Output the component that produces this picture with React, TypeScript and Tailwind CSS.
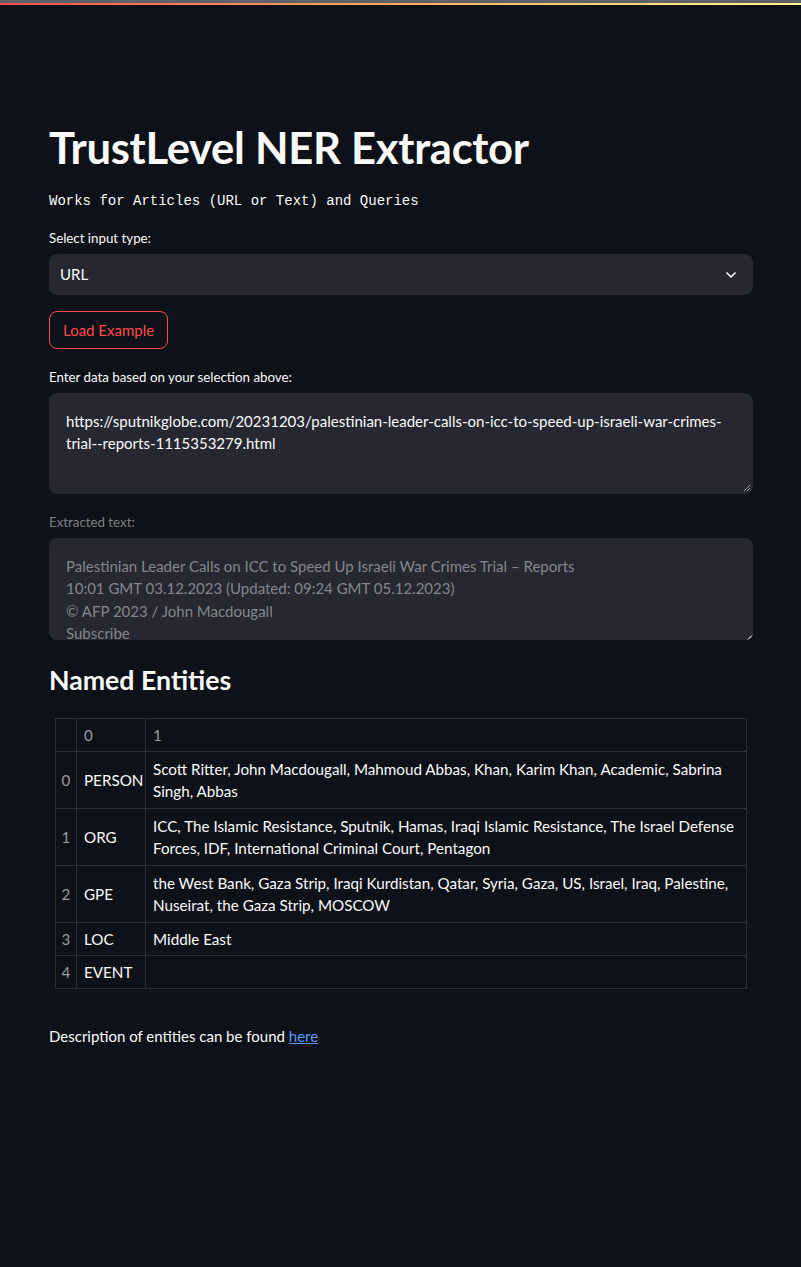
import { ChevronDown } from "lucide-react";

const rows = [
  { i: 0, type: "PERSON", text: "Scott Ritter, John Macdougall, Mahmoud Abbas, Khan, Karim Khan, Academic, Sabrina Singh, Abbas" },
  { i: 1, type: "ORG", text: "ICC, The Islamic Resistance, Sputnik, Hamas, Iraqi Islamic Resistance, The Israel Defense Forces, IDF, International Criminal Court, Pentagon" },
  { i: 2, type: "GPE", text: "the West Bank, Gaza Strip, Iraqi Kurdistan, Qatar, Syria, Gaza, US, Israel, Iraq, Palestine, Nuseirat, the Gaza Strip, MOSCOW" },
  { i: 3, type: "LOC", text: "Middle East" },
  { i: 4, type: "EVENT", text: "" },
];

function Label({ children, muted }: { children: React.ReactNode; muted?: boolean }) {
  return (
    <div className={`text-[13.3px] leading-[22px] mb-[5px] ${muted ? "text-[#7d7e83]" : "text-[#fafafa]"}`}>
      {children}
    </div>
  );
}

export default function App() {
  return (
    <div
      className="min-h-[1267px] bg-[#0e1117] text-[#fafafa]"
      style={{ fontFamily: "Lato, 'Liberation Sans', sans-serif" }}
    >
      {/* top decoration */}
      <div className="h-[3px] bg-[#5c6267]" />
      <div className="h-[2px] bg-gradient-to-r from-[#ff4b4b] to-[#fffd80]" />

      <div className="pl-[49px] pr-[48px] pt-[112px]">
        <h1 className="text-[43.6px] leading-[60px] font-bold tracking-[-0.3px]">TrustLevel NER Extractor</h1>
        <p
          className="mt-[14px] text-[14px] leading-[20px]"
          style={{ fontFamily: "'Liberation Mono', 'DejaVu Sans Mono', monospace" }}
        >
          Works for Articles (URL or Text) and Queries
        </p>

        <div className="mt-[16px]">
          <Label>Select input type:</Label>
          <div className="h-[41px] rounded-[8px] bg-[#262730] flex items-center justify-between pl-[11px] pr-[14px] text-[15px]">
            <span>URL</span>
            <ChevronDown size={16} strokeWidth={2.5} />
          </div>
        </div>

        <button className="mt-[16px] h-[38px] px-[13px] rounded-[8px] border border-[#ff4b4b] text-[#ff4b4b] text-[15px]">
          Load Example
        </button>

        <div className="mt-[17px]">
          <Label>Enter data based on your selection above:</Label>
          <div className="relative h-[101px] rounded-[8px] bg-[#262730] px-[17px] pt-[17px] text-[15px] leading-[22.4px]">
            https://sputnikglobe.com/20231203/palestinian-leader-calls-on-icc-to-speed-up-israeli-war-crimes-trial--reports-1115353279.html
            <svg className="absolute right-[2px] bottom-[2px]" width="8" height="8" viewBox="0 0 8 8">
              <path d="M7 1 L1 7 M7 4 L4 7" stroke="#9a9ba0" strokeWidth="1" />
            </svg>
          </div>
        </div>

        <div className="mt-[17px]">
          <Label muted>Extracted text:</Label>
          <div className="relative h-[102px] overflow-hidden rounded-[8px] bg-[#262730] px-[17px] pt-[17px] text-[15px] leading-[22.4px] text-[#85868b]">
            <div>Palestinian Leader Calls on ICC to Speed Up Israeli War Crimes Trial – Reports</div>
            <div>10:01 GMT 03.12.2023 (Updated: 09:24 GMT 05.12.2023)</div>
            <div>© AFP 2023 / John Macdougall</div>
            <div>Subscribe</div>
            <svg className="absolute right-0 bottom-0" width="6" height="6" viewBox="0 0 6 6">
              <path d="M6 0 L6 6 L0 6 Z" fill="#fafafa" />
            </svg>
          </div>
        </div>

        <h2 className="mt-[22px] text-[26.7px] leading-[36px] font-bold">Named Entities</h2>

        <div className="mt-[20px] px-[6px]">
          <table className="w-full table-fixed border-collapse text-[15.2px] leading-[22.4px]">
            <colgroup>
              <col className="w-[21px]" />
              <col className="w-[69px]" />
              <col />
            </colgroup>
            <thead>
              <tr className="h-[33px]">
                <th className="border border-[#2c2f38]" />
                <th className="border border-[#2c2f38] text-left font-normal text-[#9a9ba0] px-[7px]">0</th>
                <th className="border border-[#2c2f38] text-left font-normal text-[#9a9ba0] px-[7px]">1</th>
              </tr>
            </thead>
            <tbody>
              {rows.map((r) => (
                <tr key={r.i} className={r.text.length > 20 ? "h-[57px]" : "h-[33px]"}>
                  <td className="border border-[#2c2f38] text-center text-[#9a9ba0]">{r.i}</td>
                  <td className="border border-[#2c2f38] px-[7px]">{r.type}</td>
                  <td className="border border-[#2c2f38] px-[7px]">{r.text}</td>
                </tr>
              ))}
            </tbody>
          </table>
        </div>

        <p className="mt-[35px] text-[15px] leading-[24px]">
          Description of entities can be found{" "}
          <a href="#" className="text-[#5c9dff] underline">
            here
          </a>
        </p>
      </div>
    </div>
  );
}
